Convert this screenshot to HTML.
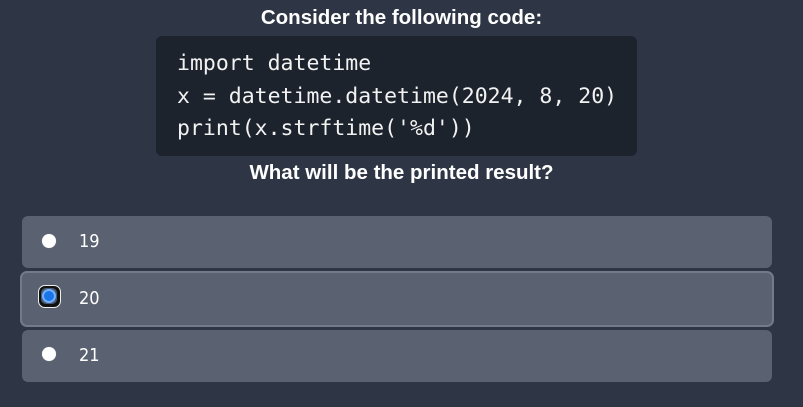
<!DOCTYPE html>
<html><head><meta charset="utf-8"><style>
html,body{margin:0;padding:0}
body{width:803px;height:407px;background:#2e3646;position:relative;overflow:hidden;font-family:"Liberation Sans",sans-serif;color:#fff}
.t{position:absolute;left:0;width:803px;text-align:center;font-size:20.5px;font-weight:bold}
.code{position:absolute;left:156px;top:36px;width:481px;height:120px;background:#1c232d;border-radius:6px;box-sizing:border-box;padding:12px 0 0 21px;font-family:"DejaVu Sans Mono","Liberation Mono",monospace;font-size:21.5px;line-height:32.5px;white-space:pre;color:#f2f2f2}
.opt{position:absolute;left:22px;width:750px;height:52px;background:#5a6170;border-radius:6px;box-sizing:border-box}
.opt.sel{left:20px;width:754px;height:56px;border:2px solid #737b8a;border-radius:7px}
.r{position:absolute;left:42px;width:14px;height:14px;border-radius:50%;background:#fff;box-shadow:0 0 1px #999}
.lab{position:absolute;left:79px;font-size:18px;color:#fff;font-family:"DejaVu Sans","Liberation Sans",sans-serif;transform:scaleX(0.9);transform-origin:left}
.rs{position:absolute;left:38px;top:285px;width:23px;height:23px;border-radius:7px;background:#111;box-sizing:border-box;border:1.5px solid #eee}
.rs::before{content:"";position:absolute;left:2px;top:2px;width:16px;height:16px;border-radius:5px;background:#4a5c74}
.rs::after{content:"";position:absolute;left:3px;top:3px;width:10px;height:10px;border-radius:50%;border:2px solid #6fb0ff;background:#1a73e8}
</style></head><body>
<div class="t" style="top:6px">Consider the following code:</div>
<div class="code">import datetime
x = datetime.datetime(2024, 8, 20)
print(x.strftime('%d'))</div>
<div class="t" style="top:161px">What will be the printed result?</div>
<div class="opt" style="top:216px"></div>
<div class="opt sel" style="top:271px"></div>
<div class="opt" style="top:330px"></div>
<div class="r" style="top:234px"></div>
<div class="lab" style="top:231px">19</div>
<div class="rs"></div>
<div class="lab" style="top:288px">20</div>
<div class="r" style="top:347px"></div>
<div class="lab" style="top:345px">21</div>
</body></html>
